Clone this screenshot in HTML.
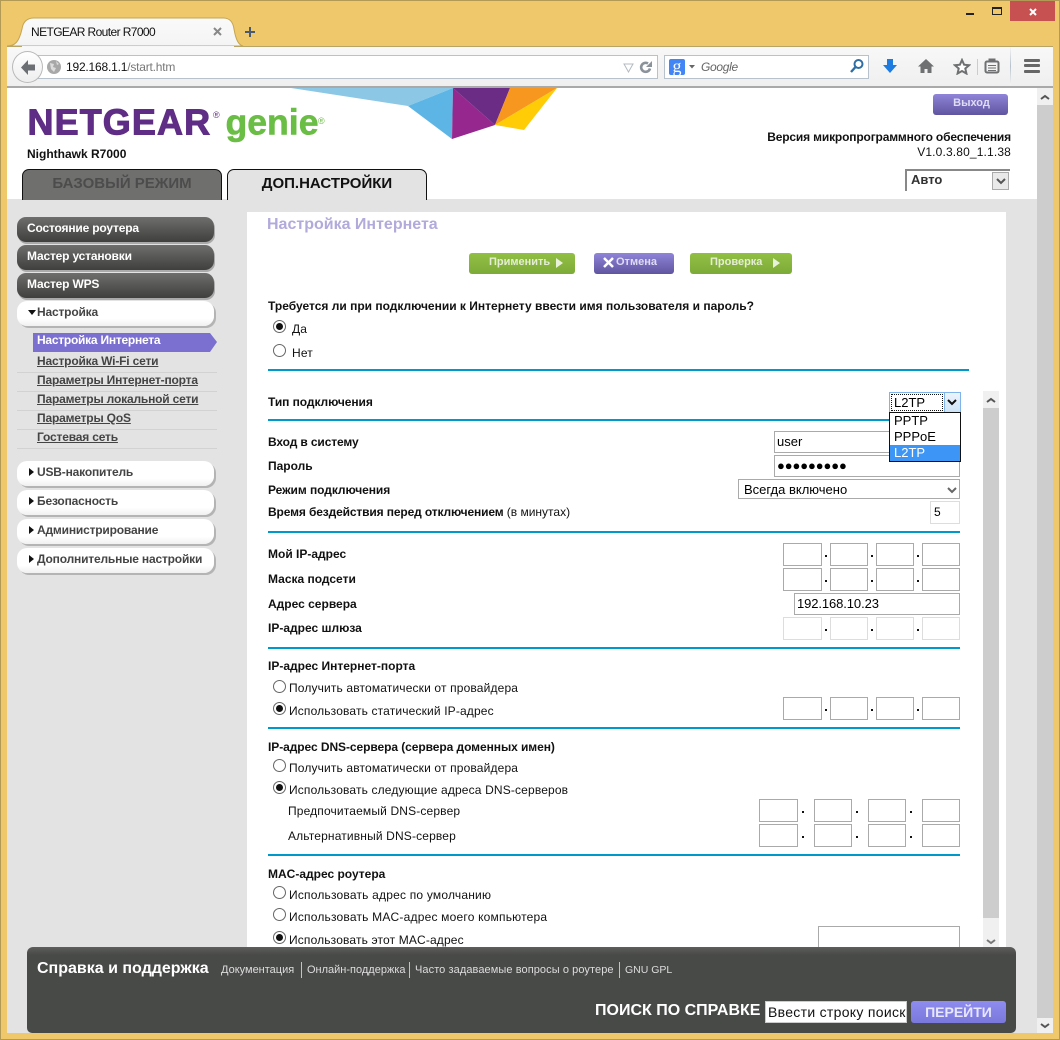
<!DOCTYPE html>
<html lang="ru"><head><meta charset="utf-8"><title>NETGEAR Router R7000</title>
<style>
html,body{margin:0;padding:0}
body{width:1060px;height:1040px;position:relative;overflow:hidden;background:#efc86b;font-family:"Liberation Sans",Arial,sans-serif;font-size:12px;color:#000}
div,a{position:absolute;white-space:nowrap;box-sizing:border-box}
.t{line-height:14px;height:14px;font-size:12px;color:#111;letter-spacing:.15px}
.b{font-weight:bold;letter-spacing:0}
.ln{height:2px;background:#0099cc;left:268px;width:692px}
.i{border:1px solid #aaa;background:#fff;height:23px}
.d{border-color:#ddd}
.dot{width:2px;height:2px;background:#111}
.r{width:13px;height:13px;border:1px solid #666;border-radius:50%;background:#fff}
.r.c::after{content:"";position:absolute;left:2px;top:2px;width:7px;height:7px;border-radius:50%;background:#111}
.m{left:17px;width:197px;height:25px;border-radius:9px;background:linear-gradient(#6e6e6c,#3f3f3d);box-shadow:1px 2px 0 #aaa;color:#fff;font-weight:bold;line-height:22px;padding-left:10px;letter-spacing:-.18px}
.w{left:17px;width:197px;height:25px;border-radius:10px;background:linear-gradient(#fff 70%,#f0f0f0);box-shadow:2px 2px 0 #b4b4b4;color:#444;font-weight:bold;line-height:22px;padding-left:20px;letter-spacing:-.18px}
.w::before{content:"";position:absolute;left:12px;top:7px;border-left:5px solid #111;border-top:4px solid transparent;border-bottom:4px solid transparent}
.w.o::before{left:11px;top:9px;border-top:5px solid #111;border-left:4px solid transparent;border-right:4px solid transparent;border-bottom:0}
.s{left:37px;color:#444;font-weight:bold;text-decoration:underline;line-height:14px;letter-spacing:-.18px}
.sl{left:17px;width:200px;height:1px;background:#d2d2d2}
.g{height:21px;border-radius:3px;background:linear-gradient(#92c044,#7dab38);color:#e4eed2;font-weight:bold;font-size:11px;line-height:19px}
.p{height:21px;border-radius:3px;background:linear-gradient(#8f84d8,#5f559f);color:#dfdcf5;font-weight:bold;font-size:11px;line-height:19px}
.tri{width:0;height:0;border-left:7px solid #e8f2d8;border-top:5px solid transparent;border-bottom:5px solid transparent}
.fl{color:#ddd;font-size:11px;line-height:14px;top:963px}
.fs{width:1px;height:16px;top:962px;background:#bcc4d0}
</style></head><body>
<div style="left:0;top:0;width:1060px;height:1px;background:#b09a55"></div>
<div style="left:0;top:1039px;width:1060px;height:1px;background:#b09a55"></div>
<div style="left:0;top:0;width:1px;height:1040px;background:#b09a55"></div>
<div style="left:1059px;top:0;width:1px;height:1040px;background:#b09a55"></div>

<!-- window buttons -->
<div style="left:966px;top:13px;width:8px;height:2px;background:#222"></div>
<div style="left:992px;top:7px;width:10px;height:8px;border:1px solid #222;border-top:2px solid #222"></div>
<div style="left:1010px;top:1px;width:45px;height:20px;background:#c75050"><svg width="45" height="20" style="display:block"><path d="M20 8l6 6M26 8l-6 6" stroke="#fff" stroke-width="2"/></svg></div>

<!-- tab -->
<svg style="position:absolute;left:7px;top:17px" width="240" height="30"><defs><linearGradient id="tg" x1="0" y1="0" x2="0" y2="1"><stop offset="0" stop-color="#fafafa"/><stop offset="1" stop-color="#f4f4f4"/></linearGradient></defs><path d="M0 29C8 29 12 25 15 12C16 5 20 1 27 1H216C223 1 226 5 227 12C229 24 232 28 236 29Z" fill="url(#tg)" stroke="#c5a550"/></svg>
<div class="t" style="left:31px;top:25px;color:#111;letter-spacing:-.6px">NETGEAR Router R7000</div>
<svg style="position:absolute;left:213px;top:27px" width="10" height="10"><path d="M1 1l7 7M8 1l-7 7" stroke="#888" stroke-width="2"/></svg>
<svg style="position:absolute;left:245px;top:27px" width="10" height="10"><path d="M5 0v10M0 5h10" stroke="#4a5a70" stroke-width="2"/></svg>

<!-- toolbar -->
<div style="left:7px;top:46px;width:1046px;height:42px;background:linear-gradient(#f8f8f8,#efefef);border-top:1px solid #b8a464;border-bottom:2px solid #a9a9a9"></div>
<div style="left:22px;top:46px;width:212px;height:1px;background:#f6f6f6"></div>
<div style="left:30px;top:55px;width:628px;height:24px;background:#fff;border:1px solid #b8c2cc"></div>
<div style="left:12px;top:51px;width:31px;height:32px;border-radius:50%;background:linear-gradient(#fff,#eee);border:1px solid #b9b9b9"></div>
<svg style="position:absolute;left:20px;top:60px" width="16" height="15"><path d="M8 0L1 7.500 8 15v-4.500h7v-6H8z" fill="#6c6f73"/></svg>
<svg style="position:absolute;left:47px;top:60px" width="14" height="14"><circle cx="7" cy="7" r="7" fill="#a8a8a8"/><path d="M3 3l4 1-1 3 3 1-2 4-3-3zM9 1l3 3-2 1z" fill="#dcdcdc"/></svg>
<div class="t" style="left:66px;top:60px;color:#111;letter-spacing:-.2px">192.168.1.1<span style="color:#777">/start.htm</span></div>
<svg style="position:absolute;left:623px;top:63px" width="11" height="10"><path d="M1 1h9L5.500 9z" fill="#fff" stroke="#b3bac0"/></svg>
<svg style="position:absolute;left:639px;top:60px" width="14" height="15"><path d="M11 8.500a4.500 4.500 0 1 1-2-5" fill="none" stroke="#8a929a" stroke-width="2.600"/><path d="M13 1v6H7z" fill="#8a929a"/></svg>
<div style="left:664px;top:55px;width:205px;height:24px;background:#fff;border:1px solid #b8c2cc"></div>
<div style="left:669px;top:59px;width:16px;height:16px;background:#4285f4;border-radius:2px;color:#fff;font:18px/14px 'Liberation Serif',serif;text-align:center">g</div>
<svg style="position:absolute;left:689px;top:65px" width="6" height="4"><path d="M0 0h6L3 3.500z" fill="#666"/></svg>
<div class="t" style="left:701px;top:60px;color:#666;font-style:italic;letter-spacing:-.3px">Google</div>
<svg style="position:absolute;left:849px;top:58px" width="16" height="16"><circle cx="9.500" cy="6" r="4" fill="none" stroke="#2f6ea5" stroke-width="2"/><path d="M6.500 9L2 14" stroke="#2f6ea5" stroke-width="2.400"/></svg>
<svg style="position:absolute;left:882px;top:58px" width="16" height="16"><path d="M5 1h6v6h4l-7 8-7-8h4z" fill="#1e7be0"/></svg>
<svg style="position:absolute;left:918px;top:58px" width="16" height="16"><path d="M8 1L0 8.500h2.500V15h4v-4h3v4h4V8.500H16z" fill="#6e7072"/></svg>
<svg style="position:absolute;left:953px;top:58px" width="18" height="17"><path d="M9 2l2.100 4.700 5 .5-3.800 3.300 1.100 5L9 13l-4.400 2.500 1.100-5L1.900 7.200l5-.5z" fill="#fff" stroke="#6e7072" stroke-width="2"/></svg>
<div style="left:977px;top:59px;width:1px;height:16px;background:#ccc"></div>
<svg style="position:absolute;left:984px;top:58px" width="16" height="16"><rect x="1.500" y="3.500" width="13" height="11" rx="1.500" fill="none" stroke="#6e7072" stroke-width="2"/><path d="M5 1h6v3H5zM4 7.500h8M4 10h8M4 12.500h8" stroke="#6e7072" stroke-width="1" fill="#6e7072"/></svg>
<div style="left:1010px;top:47px;width:1px;height:38px;background:linear-gradient(#f4f4f4,#b8c2cc,#f4f4f4)"></div>
<div style="left:1024px;top:59px;width:16px;height:3px;background:#666;border-radius:1px"></div>
<div style="left:1024px;top:64px;width:16px;height:3px;background:#666;border-radius:1px"></div>
<div style="left:1024px;top:70px;width:16px;height:3px;background:#666;border-radius:1px"></div>

<!-- page -->
<div style="left:7px;top:88px;width:1030px;height:111px;background:#fff"></div>
<div style="left:7px;top:199px;width:1030px;height:834px;background:#e3e3e3"></div>
<!-- main scrollbar -->
<div style="left:1037px;top:88px;width:16px;height:945px;background:#f0f0f0"></div>
<div style="left:1037px;top:105px;width:16px;height:913px;background:#cdcdcd"></div>
<svg style="position:absolute;left:1040px;top:94px" width="10" height="7"><path d="M1 5l4-3 4 3" fill="none" stroke="#555" stroke-width="2"/></svg>
<svg style="position:absolute;left:1040px;top:1022px" width="10" height="7"><path d="M1 2l4 3 4-3" fill="none" stroke="#555" stroke-width="2"/></svg>

<!-- logo -->
<svg style="position:absolute;left:0;top:0" width="1060" height="150">
<path d="M291 88L408 106L453 88z" fill="#8cc7e6"/>
<path d="M408 106L453 88L452 139z" fill="#5cb5e4"/>
<path d="M453 88L495 125L452 139z" fill="#96278e"/>
<path d="M453 88L510 88L495 125z" fill="#6b2c85"/>
<path d="M510 88L557 88L495 125z" fill="#f7971f"/>
<path d="M495 125L557 88L524 130z" fill="#ffcc05"/>
<text x="27.500" y="134.500" font-family="Liberation Sans" font-weight="bold" font-size="36" fill="#5f2d85" stroke="#5f2d85" stroke-width="1" letter-spacing="1.100">NETGEAR</text>
<text x="213" y="118" font-family="Liberation Sans" font-size="9" fill="#5f2d85">®</text>
<text x="225.500" y="134.500" font-family="Liberation Sans" font-weight="bold" font-size="36" fill="#6abd45" stroke="#6abd45" stroke-width=".6" textLength="93" lengthAdjust="spacingAndGlyphs">genie</text>
<text x="318" y="124" font-family="Liberation Sans" font-size="9" fill="#6abd45">®</text>
</svg>
<div class="t b" style="left:27px;top:147px">Nighthawk R7000</div>

<div style="left:22px;top:169px;width:200px;height:31px;background:#6f706e;border:1px solid #111;border-bottom:0;border-radius:7px 7px 0 0;color:#4d4c4c;font-weight:bold;font-size:15px;line-height:28px;text-align:center">БАЗОВЫЙ РЕЖИМ</div>
<div style="left:227px;top:169px;width:200px;height:31px;background:#e3e3e3;border:1px solid #111;border-bottom:0;border-radius:7px 7px 0 0;color:#111;font-weight:bold;font-size:15px;line-height:28px;text-align:center">ДОП.НАСТРОЙКИ</div>

<div class="p" style="left:933px;top:94px;width:75px;height:21px;text-align:center;padding-left:2px">Выход</div>
<div class="t b" style="right:49px;top:130px;letter-spacing:-.16px">Версия микропрограммного обеспечения</div>
<div class="t" style="right:49px;top:145px">V1.0.3.80_1.1.38</div>
<div style="left:905px;top:169px;width:105px;height:22px;background:#fff;border-top:2px solid #888;border-left:2px solid #888"></div>
<div class="t b" style="left:911px;top:173px;font-size:13px;color:#333">Авто</div>
<div style="left:992px;top:172px;width:17px;height:18px;background:#e9e9e9;border:1px solid #aaa"></div>
<svg style="position:absolute;left:996px;top:178px" width="10" height="7"><path d="M1 1l4 4 4-4" fill="none" stroke="#555" stroke-width="2"/></svg>

<!-- sidebar -->
<div class="m" style="top:217px">Состояние роутера</div>
<div class="m" style="top:245px">Мастер установки</div>
<div class="m" style="top:273px">Мастер WPS</div>
<div class="w o" style="top:301px">Настройка</div>
<div style="left:33px;top:333px;width:184px;height:19px;background:#7b70d0;clip-path:polygon(0 0,177px 0,184px 9px,177px 19px,0 19px)"></div>
<div class="t b" style="left:37px;top:333px;color:#fff;letter-spacing:-.25px">Настройка Интернета</div>
<div class="s" style="top:354px">Настройка Wi-Fi сети</div><div class="sl" style="top:372px"></div>
<div class="s" style="top:373px">Параметры Интернет-порта</div><div class="sl" style="top:391px"></div>
<div class="s" style="top:392px">Параметры локальной сети</div><div class="sl" style="top:410px"></div>
<div class="s" style="top:411px">Параметры QoS</div><div class="sl" style="top:429px"></div>
<div class="s" style="top:430px">Гостевая сеть</div><div class="sl" style="top:448px"></div>
<div class="w" style="top:461px">USB-накопитель</div>
<div class="w" style="top:490px">Безопасность</div>
<div class="w" style="top:519px">Администрирование</div>
<div class="w" style="top:548px">Дополнительные настройки</div>

<!-- content -->
<div style="left:247px;top:212px;width:759px;height:740px;background:#fff"></div>
<div style="left:267px;top:216px;font-weight:bold;font-size:16px;line-height:18px;color:#b2aadb">Настройка Интернета</div>
<div class="g" style="left:469px;top:253px;width:106px;padding-left:20px">Применить</div><div class="tri" style="left:556px;top:258px"></div>
<div class="p" style="left:594px;top:253px;width:80px;padding-left:22px">Отмена</div>
<svg style="position:absolute;left:603px;top:257px" width="11" height="11"><path d="M1 1l9 9M10 1l-9 9" stroke="#fff" stroke-width="2.500"/></svg>
<div class="g" style="left:690px;top:253px;width:102px;padding-left:20px">Проверка</div><div class="tri" style="left:773px;top:258px"></div>

<div class="t b" style="left:268px;top:299px">Требуется ли при подключении к Интернету ввести имя пользователя и пароль?</div>
<div class="r c" style="left:273px;top:320px"></div><div class="t" style="left:292px;top:322px">Да</div>
<div class="r" style="left:273px;top:344px"></div><div class="t" style="left:292px;top:346px">Нет</div>
<div class="ln" style="top:369px;width:701px"></div>

<!-- inner scrollbar -->
<div style="left:983px;top:391px;width:16px;height:561px;background:#f0f0f0"></div>
<div style="left:983px;top:408px;width:16px;height:510px;background:#cdcdcd"></div>
<svg style="position:absolute;left:986px;top:397px" width="10" height="7"><path d="M1 5l4-3 4 3" fill="none" stroke="#555" stroke-width="2"/></svg>
<svg style="position:absolute;left:986px;top:938px" width="10" height="7"><path d="M1 2l4 3 4-3" fill="none" stroke="#777" stroke-width="2"/></svg>

<div class="t b" style="left:268px;top:395px;letter-spacing:-.06px">Тип подключения</div>
<div class="ln" style="top:419px"></div>
<div class="t b" style="left:268px;top:435px;letter-spacing:-.12px">Вход в систему</div>
<div class="t b" style="left:268px;top:459px">Пароль</div>
<div class="t b" style="left:268px;top:483px;letter-spacing:-.06px">Режим подключения</div>
<div class="t b" style="left:268px;top:505px;letter-spacing:-.13px">Время бездействия перед отключением <span style="font-weight:normal;letter-spacing:0">(в минутах)</span></div>

<div class="i" style="left:774px;top:431px;width:186px;height:22px;font-size:13px;line-height:20px;padding-left:2px">user</div>
<div class="i" style="left:774px;top:455px;width:186px;height:22px;font-size:13px;line-height:20px;padding-left:2px;letter-spacing:-.1px">●●●●●●●●●</div>
<div class="i" style="left:738px;top:479px;width:222px;height:20px;font-size:13px;line-height:20px;padding-left:5px">Всегда включено</div>
<svg style="position:absolute;left:947px;top:487px" width="10" height="7"><path d="M1 1l4 4 4-4" fill="none" stroke="#666" stroke-width="2"/></svg>
<div class="i d" style="left:930px;top:501px;width:30px;height:23px;font-size:12px;line-height:21px;padding-left:3px">5</div>

<!-- dropdown -->
<div style="left:889px;top:392px;width:72px;height:21px;background:#fff;border:1px solid #7eb4ea"></div>
<div style="left:891px;top:394px;width:52px;height:17px;border:1px dotted #111;font-size:13px;line-height:15px;padding-left:2px">L2TP</div>
<div style="left:944px;top:393px;width:16px;height:19px;background:linear-gradient(#ecf4fc,#cfe4f8);border-left:1px solid #7eb4ea"></div>
<svg style="position:absolute;left:947px;top:399px" width="10" height="7"><path d="M1 1l4 4 4-4" fill="none" stroke="#111" stroke-width="2"/></svg>
<div style="left:889px;top:412px;width:72px;height:50px;background:#fff;border:1px solid #111"></div>
<div style="left:894px;top:413px;font-size:13px;line-height:15px">PPTP</div>
<div style="left:894px;top:429px;font-size:13px;line-height:15px">PPPoE</div>
<div style="left:890px;top:445px;width:70px;height:16px;background:#3d96f5;color:#fff;font-size:13px;line-height:15px;padding-left:4px">L2TP</div>

<div class="ln" style="top:531px"></div>
<div class="t b" style="left:268px;top:547px">Мой IP-адрес</div>
<div class="t b" style="left:268px;top:572px">Маска подсети</div>
<div class="t b" style="left:268px;top:597px">Адрес сервера</div>
<div class="t b" style="left:268px;top:621px">IP-адрес шлюза</div>

<div class="i" style="left:783px;top:543px;width:39px"></div><div class="i" style="left:830px;top:543px;width:38px"></div><div class="i" style="left:876px;top:543px;width:38px"></div><div class="i" style="left:922px;top:543px;width:38px"></div>
<div class="dot" style="left:825px;top:555px"></div><div class="dot" style="left:871px;top:555px"></div><div class="dot" style="left:917px;top:555px"></div>
<div class="i" style="left:783px;top:568px;width:39px"></div><div class="i" style="left:830px;top:568px;width:38px"></div><div class="i" style="left:876px;top:568px;width:38px"></div><div class="i" style="left:922px;top:568px;width:38px"></div>
<div class="dot" style="left:825px;top:580px"></div><div class="dot" style="left:871px;top:580px"></div><div class="dot" style="left:917px;top:580px"></div>
<div class="i" style="left:794px;top:593px;width:166px;height:22px;font-size:13px;line-height:20px;padding-left:2px;letter-spacing:-.1px">192.168.10.23</div>
<div class="i d" style="left:783px;top:617px;width:39px"></div><div class="i d" style="left:830px;top:617px;width:38px"></div><div class="i d" style="left:876px;top:617px;width:38px"></div><div class="i d" style="left:922px;top:617px;width:38px"></div>
<div class="dot" style="left:825px;top:629px"></div><div class="dot" style="left:871px;top:629px"></div><div class="dot" style="left:917px;top:629px"></div>

<div class="ln" style="top:647px"></div>
<div class="t b" style="left:268px;top:659px">IP-адрес Интернет-порта</div>
<div class="r" style="left:273px;top:680px"></div><div class="t" style="left:289px;top:681px">Получить автоматически от провайдера</div>
<div class="r c" style="left:273px;top:702px"></div><div class="t" style="left:289px;top:704px">Использовать статический IP-адрес</div>
<div class="i" style="left:783px;top:697px;width:39px"></div><div class="i" style="left:830px;top:697px;width:38px"></div><div class="i" style="left:876px;top:697px;width:38px"></div><div class="i" style="left:922px;top:697px;width:38px"></div>
<div class="dot" style="left:825px;top:709px"></div><div class="dot" style="left:871px;top:709px"></div><div class="dot" style="left:917px;top:709px"></div>
<div class="ln" style="top:727px"></div>

<div class="t b" style="left:268px;top:740px;letter-spacing:-.07px">IP-адрес DNS-сервера (сервера доменных имен)</div>
<div class="r" style="left:273px;top:759px"></div><div class="t" style="left:289px;top:761px">Получить автоматически от провайдера</div>
<div class="r c" style="left:273px;top:781px"></div><div class="t" style="left:289px;top:783px">Использовать следующие адреса DNS-серверов</div>
<div class="t" style="left:288px;top:804px">Предпочитаемый DNS-сервер</div>
<div class="t" style="left:288px;top:829px">Альтернативный DNS-сервер</div>
<div class="i" style="left:759px;top:799px;width:39px"></div><div class="i" style="left:814px;top:799px;width:38px"></div><div class="i" style="left:868px;top:799px;width:38px"></div><div class="i" style="left:922px;top:799px;width:38px"></div>
<div class="dot" style="left:802px;top:811px"></div><div class="dot" style="left:856px;top:811px"></div><div class="dot" style="left:910px;top:811px"></div>
<div class="i" style="left:759px;top:824px;width:39px"></div><div class="i" style="left:814px;top:824px;width:38px"></div><div class="i" style="left:868px;top:824px;width:38px"></div><div class="i" style="left:922px;top:824px;width:38px"></div>
<div class="dot" style="left:802px;top:836px"></div><div class="dot" style="left:856px;top:836px"></div><div class="dot" style="left:910px;top:836px"></div>
<div class="ln" style="top:854px"></div>

<div class="t b" style="left:268px;top:867px">MAC-адрес роутера</div>
<div class="r" style="left:273px;top:886px"></div><div class="t" style="left:289px;top:888px;letter-spacing:.2px">Использовать адрес по умолчанию</div>
<div class="r" style="left:273px;top:908px"></div><div class="t" style="left:289px;top:910px;letter-spacing:.2px">Использовать MAC-адрес моего компьютера</div>
<div class="r c" style="left:273px;top:931px"></div><div class="t" style="left:289px;top:933px">Использовать этот MAC-адрес</div>
<div class="i" style="left:818px;top:926px;width:142px;height:30px"></div>

<!-- footer -->
<div style="left:27px;top:947px;width:989px;height:86px;background:linear-gradient(#5e5e5c,#484a48 8px);border-radius:6px 6px 5px 5px"></div>
<div style="left:37px;top:960px;color:#fff;font-weight:bold;font-size:16px;line-height:18px">Справка и поддержка</div>
<div class="fl" style="left:221px">Документация</div><div class="fs" style="left:301px"></div>
<div class="fl" style="left:307px">Онлайн-поддержка</div><div class="fs" style="left:409px"></div>
<div class="fl" style="left:415px;letter-spacing:.08px">Часто задаваемые вопросы о роутере</div><div class="fs" style="left:619px"></div>
<div class="fl" style="left:625px;font-size:10.500px">GNU GPL</div>
<div style="left:595px;top:1002px;color:#fff;font-weight:bold;font-size:16px;line-height:18px">ПОИСК ПО СПРАВКЕ</div>
<div style="left:765px;top:1001px;width:142px;height:22px;background:#fff;border:1px solid #ccc;font-size:14px;line-height:20px;padding-left:2px;overflow:hidden;color:#111;letter-spacing:.3px">Ввести строку поиск</div>
<div style="left:911px;top:1001px;width:95px;height:22px;border-radius:3px;background:linear-gradient(#8f8cf0,#7b78dc);color:#e6e6ff;font-weight:bold;font-size:14px;line-height:22px;text-align:center">ПЕРЕЙТИ</div>
</body></html>
